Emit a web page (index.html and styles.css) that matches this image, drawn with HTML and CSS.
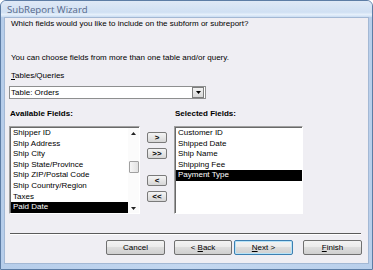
FILE: index.html
```html
<!DOCTYPE html>
<html lang="en">
<head>
    <meta charset="UTF-8">
    <title>SubReport Wizard</title>
    <link rel="stylesheet" href="styles.css">
</head>
<body>
    <div class="window">
        <div class="titlebar">SubReport Wizard</div>
        <div class="client">
            <p class="question">Which fields would you like to include on the subform or subreport?</p>
            <p class="intro">You can choose fields from more than one table and/or query.</p>
            <p class="label"><u>T</u>ables/Queries</p>
            <div class="combo">
                <span class="combo-text">Table: Orders</span>
                <span class="combo-btn">
                    <svg width="5" height="3" viewBox="0 0 5 3"><path d="M0 0H5L2.5 3Z" fill="#000"/></svg>
                </span>
            </div>

            <div class="picker">
                <div class="heading">Available Fields:</div>
                <div class="heading heading-right">Selected Fields:</div>

                <div class="listbox">
                    <ul class="items">
                        <li>Shipper ID</li>
                        <li>Ship Address</li>
                        <li>Ship City</li>
                        <li>Ship State/Province</li>
                        <li>Ship ZIP/Postal Code</li>
                        <li>Ship Country/Region</li>
                        <li>Taxes</li>
                        <li class="selected">Paid Date</li>
                    </ul>
                    <div class="scrollbar">
                        <svg class="arrow" width="5" height="3" viewBox="0 0 5 3"><path d="M0 3H5L2.5 0Z" fill="#222"/></svg>
                        <div class="thumb"></div>
                        <svg class="arrow arrow-down" width="5" height="3" viewBox="0 0 5 3"><path d="M0 0H5L2.5 3Z" fill="#222"/></svg>
                    </div>
                </div>

                <div class="movers">
                    <button class="mover">&gt;</button>
                    <button class="mover">&gt;&gt;</button>
                    <button class="mover mover-gap">&lt;</button>
                    <button class="mover">&lt;&lt;</button>
                </div>

                <div class="listbox">
                    <ul class="items">
                        <li>Customer ID</li>
                        <li>Shipped Date</li>
                        <li>Ship Name</li>
                        <li>Shipping Fee</li>
                        <li class="selected">Payment Type</li>
                    </ul>
                </div>
            </div>

            <div class="separator"></div>

            <div class="actions">
                <button class="btn">Cancel</button>
                <button class="btn btn-back">&lt; <u>B</u>ack</button>
                <button class="btn btn-default"><u>N</u>ext &gt;</button>
                <button class="btn btn-finish"><u>F</u>inish</button>
            </div>
        </div>
    </div>
</body>
</html>
```

FILE: styles.css
```css
body {
    margin: 0;
    background: #ffffff;
    font-family: "Liberation Sans", Arial, sans-serif;
    font-size: 8px;
    color: #000;
}

.window {
    width: 371px;
    height: 268px;
    border: 1px solid #5d7da5;
    border-radius: 6px 6px 0 0;
    background: linear-gradient(to right, #b6cdea, #c3d7f0 50%, #b9cfeb);
}

.titlebar {
    height: 16px;
    padding-left: 6px;
    line-height: 17px;
    font-family: "Open Sans", "Liberation Sans", sans-serif;
    font-size: 9.6px;
    color: #56698a;
    border-radius: 5px 5px 0 0;
    background: linear-gradient(to bottom, #dfe9f6, #d0e0f3 70%, #e6f0fb 85%, #c9dcf2);
}

.client {
    height: 245px;
    margin: 0 3px 5px 3px;
    border: 1px solid #a3b8d4;
    background: #efeef3;
}

p {
    margin: 0;
    line-height: 10px;
}

.question {
    margin-top: 1px;
    padding-left: 6px;
}

.intro {
    margin-top: 24px;
    padding-left: 6px;
}

.label {
    margin-top: 8px;
    padding-left: 6px;
}

.label u {
    text-decoration-thickness: 1px;
}

.combo {
    display: flex;
    align-items: center;
    width: 195px;
    height: 11px;
    margin: 5px 0 0 4px;
    border: 1px solid #8e8f8f;
    background: #fff;
}

.combo-text {
    flex: 1;
    padding-left: 1px;
    line-height: 11px;
}

.combo-btn {
    display: flex;
    align-items: center;
    justify-content: center;
    width: 10px;
    height: 9px;
    margin-right: 1px;
    border: 1px solid #7d7d7d;
    background: linear-gradient(to bottom, #f2f2f2, #d8d8d8);
}

.picker {
    display: grid;
    grid-template-columns: 131px 20px 129px;
    grid-template-rows: 10px 88px;
    column-gap: 7px;
    row-gap: 7px;
    margin: 10px 0 0 4px;
}

.heading {
    line-height: 10px;
    font-weight: bold;
    padding-left: 1px;
}

.heading-right {
    grid-column: 3;
}

.listbox {
    display: flex;
    box-sizing: border-box;
    border: 1px solid;
    border-color: #a0a0a0 #ffffff #ffffff #a0a0a0;
    box-shadow: inset 1px 1px 0 #696969;
    background: #fff;
    padding: 1px 0 0 1px;
    overflow: hidden;
}

.items {
    flex: 1;
    list-style: none;
    margin: 0;
    padding: 0;
}

.items li {
    height: 10.6px;
    line-height: 10.6px;
    padding-left: 2px;
    white-space: nowrap;
}

.items li.selected {
    background: #000;
    color: #fff;
}

.scrollbar {
    display: flex;
    flex-direction: column;
    align-items: center;
    width: 11px;
    background: #fbfbfb;
}

.arrow {
    margin-top: 4px;
}

.thumb {
    box-sizing: border-box;
    width: 10px;
    height: 12px;
    margin-top: 26px;
    border: 1px solid #a0a0a0;
    border-radius: 1px;
    background: linear-gradient(to right, #f6f6f6, #e2e2e2);
}

.arrow-down {
    margin-top: auto;
    margin-bottom: 3px;
}

.movers {
    display: flex;
    flex-direction: column;
}

button {
    font-family: inherit;
    font-size: 8px;
    color: #000;
    padding: 0;
    cursor: pointer;
}

.mover {
    height: 11px;
    margin-top: 5px;
    border: 1px solid #7a7a7a;
    border-radius: 2px;
    background: linear-gradient(to bottom, #f4f4f4, #e6e6e6 50%, #d6d6d6);
    font-weight: bold;
    line-height: 9px;
}

.mover:first-child {
    margin-top: 6px;
}

.mover-gap {
    margin-top: 16px;
}

.separator {
    height: 1px;
    margin: 19px 7px 0 5px;
    background: #5a5a5a;
    border-bottom: 1px solid #ffffff;
}

.actions {
    display: flex;
    justify-content: flex-end;
    margin-top: 5px;
    padding-right: 6px;
}

.btn {
    width: 59px;
    height: 15px;
    border: 1px solid #707070;
    border-radius: 2px;
    background: linear-gradient(to bottom, #f3f3f3, #ebebeb 45%, #dddddd 50%, #cfcfcf);
    line-height: 13px;
}

.btn-back {
    margin-left: 9px;
    width: 58px;
}

.btn-default {
    margin-left: 2px;
    border-color: #3c7fb1;
    box-shadow: inset 0 0 0 1px #b7e3f8;
}

.btn-finish {
    margin-left: 10px;
}
```
